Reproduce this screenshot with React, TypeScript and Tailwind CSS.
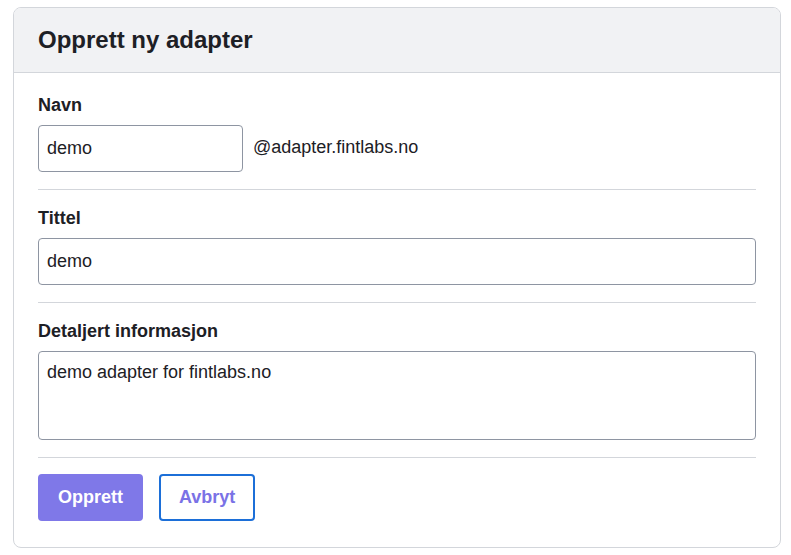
import React from "react";

export default function App() {
  const font = { fontFamily: '"Liberation Sans", Arial, sans-serif' };
  return (
    <div className="min-h-[555px] w-[791px] bg-white pt-[7px] pl-[13px]" style={font}>
      <div className="w-[768px] overflow-hidden rounded-[8px] border border-[#d3d6db] bg-white text-[#1d2025]">
        <div className="border-b border-[#d3d6db] bg-[#f1f2f4] px-6 pt-[16px] pb-[16px]">
          <h1 className="text-[24px] font-bold leading-[32px]">Opprett ny adapter</h1>
        </div>
        <div className="px-6 pt-[19px] pb-[26px]">
          <label className="mb-[6px] block text-[18px] font-bold leading-[27px]">Navn</label>
          <div className="flex items-start gap-[10px]">
            <input
              defaultValue="demo"
              className="h-[47px] w-[205px] rounded-[4px] border border-[#8e95a2] bg-white px-2 text-[18px] text-[#1d2025] outline-none"
            />
            <span className="pt-[9px] text-[18px] leading-[27px]">@adapter.fintlabs.no</span>
          </div>
          <div className="mt-[17px] mb-[15px] h-px bg-[#d3d6db]" />
          <label className="mb-[6px] block text-[18px] font-bold leading-[27px]">Tittel</label>
          <input
            defaultValue="demo"
            className="block h-[47px] w-full rounded-[4px] border border-[#8e95a2] bg-white px-2 text-[18px] text-[#1d2025] outline-none"
          />
          <div className="mt-[17px] mb-[15px] h-px bg-[#d3d6db]" />
          <label className="mb-[6px] block text-[18px] font-bold leading-[27px]">Detaljert informasjon</label>
          <textarea
            defaultValue="demo adapter for fintlabs.no"
            className="block h-[89px] w-full resize-none rounded-[4px] border border-[#8e95a2] bg-white px-2 pt-[7px] text-[18px] leading-[27px] text-[#1d2025] outline-none"
          />
          <div className="mt-[17px] mb-[16px] h-px bg-[#d3d6db]" />
          <div className="flex gap-4">
            <button className="h-[47px] rounded-[4px] border-2 border-[#7f78e8] bg-[#7f78e8] px-[18px] text-[18px] font-bold text-white">
              Opprett
            </button>
            <button className="h-[47px] rounded-[4px] border-2 border-[#1c6fd8] bg-white px-[18px] text-[18px] font-bold text-[#7a72e6]">
              Avbryt
            </button>
          </div>
        </div>
      </div>
    </div>
  );
}
